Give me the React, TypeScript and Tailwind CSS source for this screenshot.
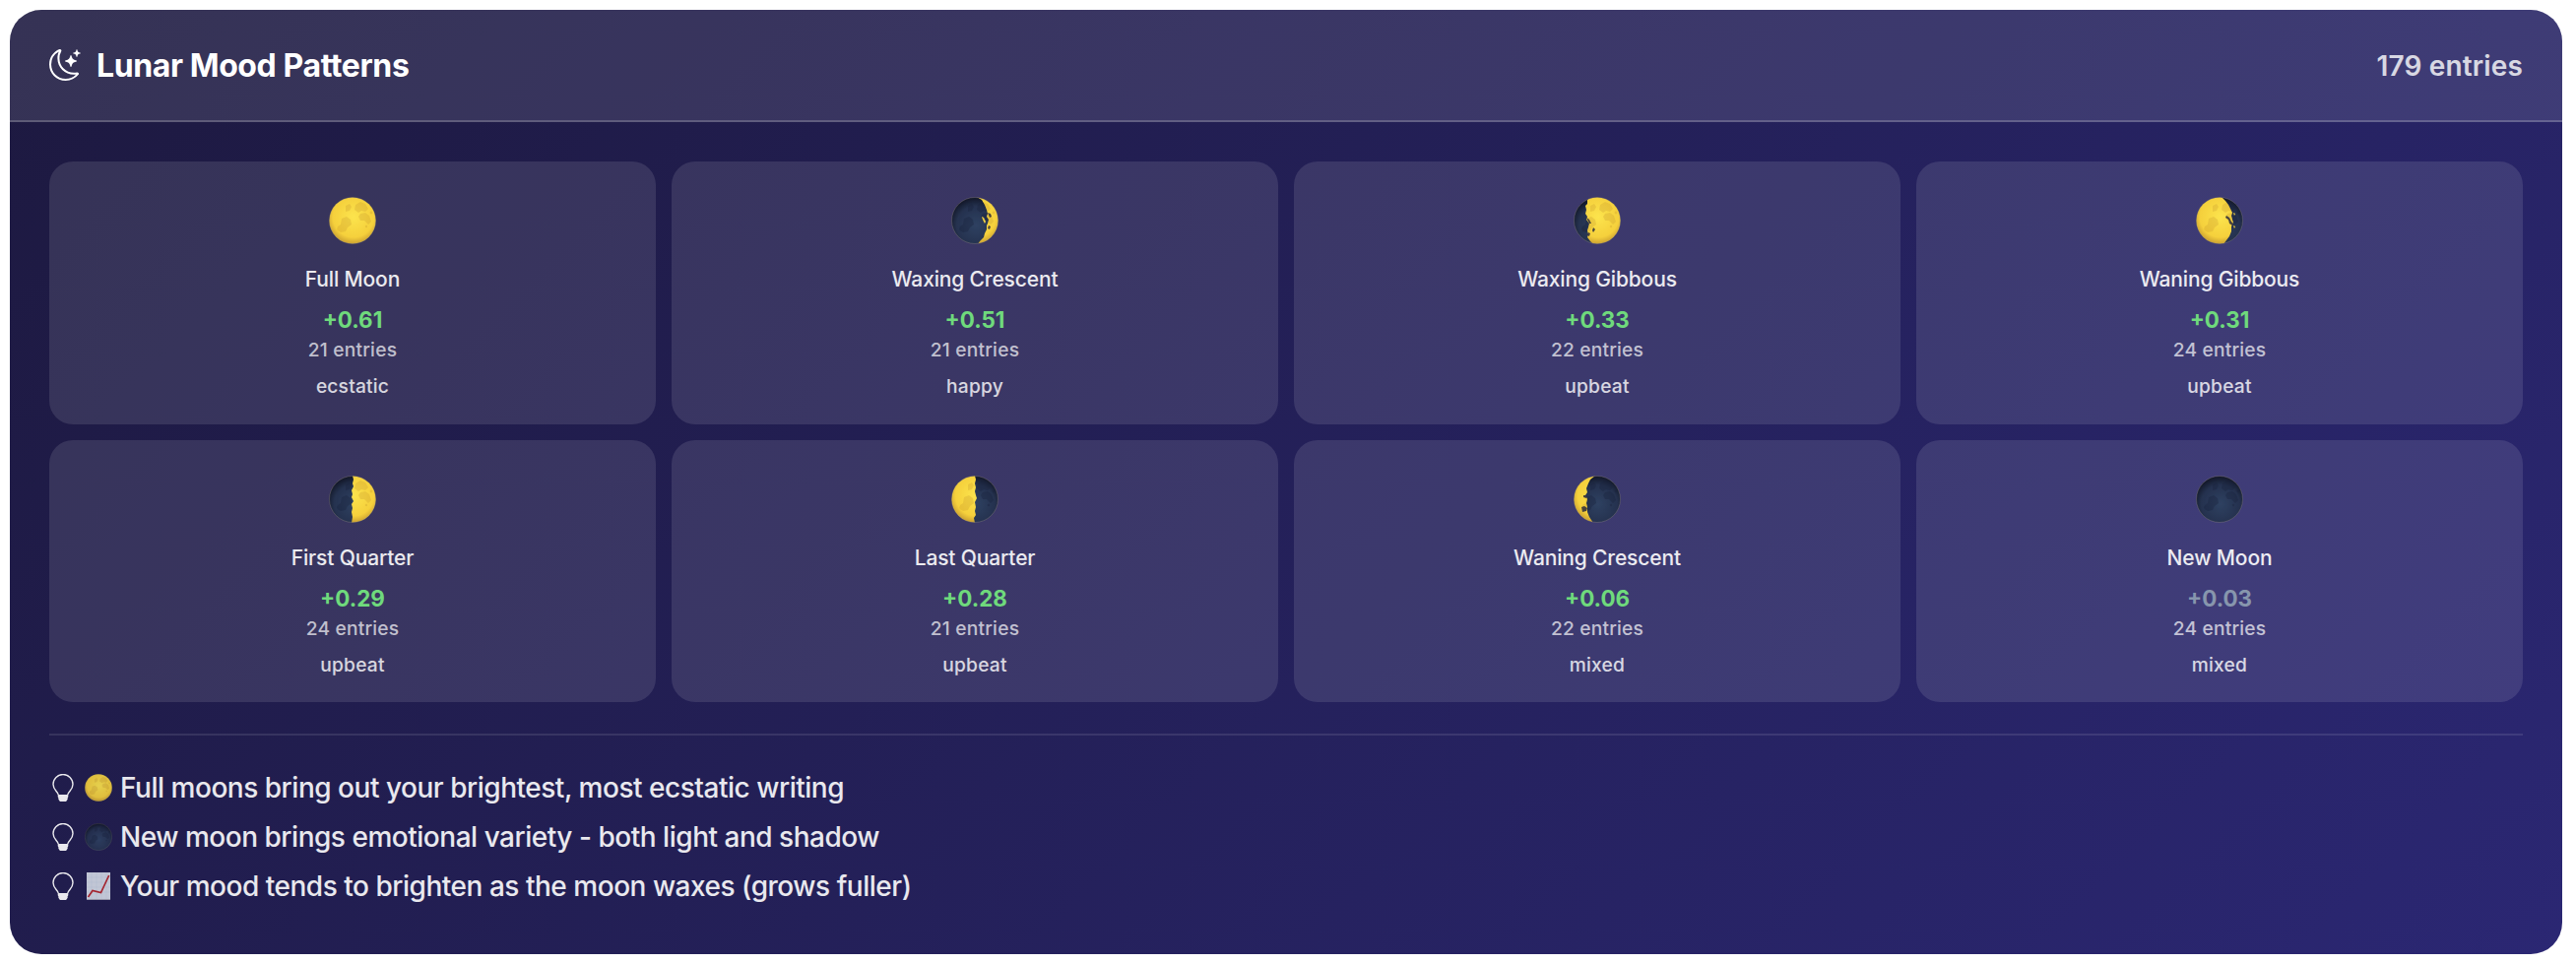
import { useId } from "react"
import { BsMoonStars } from "react-icons/bs"

type PhaseKey =
    | 'full'
    | 'waxingCrescent'
    | 'waxingGibbous'
    | 'waningGibbous'
    | 'firstQuarter'
    | 'lastQuarter'
    | 'waningCrescent'
    | 'new'

interface PhaseStat {
    key: PhaseKey
    name: string
    score: number
    entries: number
    mood: string
}

const phases: PhaseStat[] = [
    { key: 'full', name: 'Full Moon', score: 0.61, entries: 21, mood: 'ecstatic' },
    { key: 'waxingCrescent', name: 'Waxing Crescent', score: 0.51, entries: 21, mood: 'happy' },
    { key: 'waxingGibbous', name: 'Waxing Gibbous', score: 0.33, entries: 22, mood: 'upbeat' },
    { key: 'waningGibbous', name: 'Waning Gibbous', score: 0.31, entries: 24, mood: 'upbeat' },
    { key: 'firstQuarter', name: 'First Quarter', score: 0.29, entries: 24, mood: 'upbeat' },
    { key: 'lastQuarter', name: 'Last Quarter', score: 0.28, entries: 21, mood: 'upbeat' },
    { key: 'waningCrescent', name: 'Waning Crescent', score: 0.06, entries: 22, mood: 'mixed' },
    { key: 'new', name: 'New Moon', score: 0.03, entries: 24, mood: 'mixed' },
]

// Lit side of the disc in a 48x48 box, clipped to the circle
const litPaths: Record<PhaseKey, string> = {
    full: 'M0 0H48V48H0Z',
    waxingCrescent: 'M26 0L31 3L34 8L36 13L37 17L36 20L38 23L37 27L36 29L36 33L34 37L33 41L29 45L27 48H48V0Z M31 20l2 1l2 4l-1 2l-2-4z',
    waxingGibbous: 'M18 0L14 3L14 7L12 9L13 13L12 17L14 20L13 23L16 27L15 31L14 34L15 38L14 41L17 45L20 48H48V0Z',
    waningGibbous: 'M26 0L30 4L33 8L35 12L37 16L36 19L37 23L38 26L36 30L36 35L34 40L31 44L28 48H0V0Z M38 16l2 1l-1 2z M38 29l2 1l-1 2z',
    firstQuarter: 'M24 0L25 4L24 8L25 11L23 15L24 19L23 22L25 26L23 29L24 33L23 37L24 42L23 48H48V0Z',
    lastQuarter: 'M24 0L25 4L24 8L25 12L24 16L25 20L26 23L24 27L25 32L24 36L25 40L23 43L24 48H0V0Z',
    waningCrescent: 'M22 0L17 4L15 8L13 13L14 17L12 20L14 24L13 28L14 32L14 37L16 42L20 48H0V0Z',
    new: '',
}

// Craters that sit right on the terminator of each phase
const rimPaths: Partial<Record<PhaseKey, string>> = {
    waxingCrescent: 'M37 16l3 1l1 3l-2 1z M38 29l2 1l-1 3l-2-1z',
    waxingGibbous: 'M13 21l3 2l2 4l-2 0z M20 31l2 2l-2 3l-1-2z M9 32l2 1l-1 3z M15 36l2 1l-1 3l-2-1z',
    waningGibbous: 'M31 19l3 2l2 4l2 2l-1 2l-3-2l-1-4l-3-2z',
    waningCrescent: 'M10 20l3 0l0 3l-3-1z M8 32l3-1l3 2l-1 3l-4 1z',
}

function MoonIcon({ phase, className }: { phase: PhaseKey; className: string }) {
    const id = useId()
    const craters = (
        <>
            <path d="M27 8l5-3 5 2 3 5-3 3-4-1-3 2-4-3z" />
            <path d="M32 17l5-1 4 3 2 6-3 3-4-4-4 0-2-4z" />
            <path d="M13 22l5-2 4 3 1 5-4 3-2 4-5 1-4-3 1-3 3-2z" />
            <path d="M17 9l4-2 2 3-2 4-4 1z" />
            <circle cx="11" cy="33" r="2" />
            <circle cx="38" cy="30" r="1.2" />
            <circle cx="43" cy="16" r="1.4" />
        </>
    )
    return (
        <svg viewBox="0 0 48 48" className={className} aria-hidden="true">
            <defs>
                <clipPath id={`${id}-disc`}>
                    <circle cx="24" cy="24" r="23.6" />
                </clipPath>
                <clipPath id={`${id}-side`}>
                    <path d={litPaths[phase]} />
                </clipPath>
                <radialGradient id={`${id}-gold`} cx="0.52" cy="0.42" r="0.62">
                    <stop offset="0" stopColor="#fce44e" />
                    <stop offset="0.7" stopColor="#f5d03c" />
                    <stop offset="1" stopColor="#bd912d" />
                </radialGradient>
                <radialGradient id={`${id}-night`} cx="0.52" cy="0.6" r="0.58">
                    <stop offset="0" stopColor="#2f4262" />
                    <stop offset="0.7" stopColor="#25324f" />
                    <stop offset="1" stopColor="#121728" />
                </radialGradient>
            </defs>
            <g clipPath={`url(#${id}-disc)`}>
                <rect width="48" height="48" fill={`url(#${id}-night)`} />
                <g fill="#17203b" opacity="0.35">{craters}</g>
                <g clipPath={`url(#${id}-side)`}>
                    <rect width="48" height="48" fill={`url(#${id}-gold)`} />
                    <g fill="#c5972b" opacity="0.28">{craters}</g>
                </g>
                <path d={rimPaths[phase]} fill="#2c2c3c" opacity="0.85" />
            </g>
            <circle cx="24" cy="24" r="23.5" fill="none" stroke="#b0a78f" strokeOpacity="0.4" strokeWidth="0.7" />
        </svg>
    )
}

function ChartIcon() {
    return (
        <svg viewBox="0 0 28 28" className="size-7" aria-hidden="true">
            <rect x="2" y="0" width="24" height="28" fill="#d3d9e4" />
            <path d="M2.5 5H26M2.5 10H26M2.5 15H26M2.5 20H26M7 0V28M12 0V28M17 0V28M22 0V28" stroke="#bcc9dc" strokeWidth="0.5" />
            <path d="M2 27.5H26" stroke="#a3a5b2" />
            <path d="M3.5 25L8 18.5L16.5 20.5L24.7 3" fill="none" stroke="#b3262c" strokeWidth="1.7" />
        </svg>
    )
}

function BulbIcon() {
    return (
        <svg viewBox="0 0 28 28" className="size-7" aria-hidden="true">
            <path
                d="M9.2 21C8.7 17.7 4 16.2 4 10.5a10 10 0 0 1 20 0C24 16.2 19.3 17.7 18.8 21"
                fill="none"
                stroke="currentColor"
                strokeWidth="1.4"
            />
            <path d="M8.7 21H19.3V23.2L18.6 24.3L18.8 25.2L17.8 27.2L16.8 28H11.2L10.2 27.2L9.2 25.2L9.4 24.3L8.7 23.2Z" fill="currentColor" />
        </svg>
    )
}

const insights = [
    { icon: <MoonIcon phase="full" className="size-7" />, text: 'Full moons bring out your brightest, most ecstatic writing' },
    { icon: <MoonIcon phase="new" className="size-7" />, text: 'New moon brings emotional variety - both light and shadow' },
    { icon: <ChartIcon />, text: 'Your mood tends to brighten as the moon waxes (grows fuller)' },
]

function PhaseCard({ phase }: { phase: PhaseStat }) {
    const scoreColor = phase.score > 0.05 ? 'text-[#6fda7c]' : 'text-[#8796ad]'

    return (
        <div className="flex flex-col items-center rounded-3xl bg-white/[0.11] pt-9">
            <MoonIcon phase={phase.key} className="size-12" />
            <p className="mt-[22px] text-[21px] leading-[28px] font-medium tracking-[-0.15px] text-white/90">{phase.name}</p>
            <p className={`mt-[13px] text-[22.4px] leading-[28px] font-bold ${scoreColor}`}>
                +{phase.score.toFixed(2)}
            </p>
            <p className="mt-[4px] text-[19.2px] leading-[24px] font-medium tracking-[0.2px] text-white/70">{phase.entries} entries</p>
            <p className="mt-[13px] text-[19.2px] leading-[24px] font-medium tracking-[0.2px] text-white/80">{phase.mood}</p>
        </div>
    )
}

export default function App() {
    const total = phases.reduce((sum, p) => sum + p.entries, 0)

    return (
        <div className="h-[978px] bg-white pt-[10px] pr-[14px] pl-[10px] font-['Inter',sans-serif]">
            <div className="h-[959px] overflow-hidden rounded-[32px] bg-linear-135 from-[#1d1940] to-[#2b2773]">
                {/* Header */}
                <div className="flex h-[114px] items-center justify-between border-b-2 border-white/20 bg-white/[0.11] px-10">
                    <div className="flex items-center gap-4 text-white">
                        <BsMoonStars className="size-8" />
                        <h2 className="pt-[2px] text-[32px] leading-[40px] font-bold tracking-[-0.4px]">Lunar Mood Patterns</h2>
                    </div>
                    <span className="pt-[1px] text-[28px] leading-[36px] font-semibold tracking-[0.15px] text-white/80">{total} entries</span>
                </div>

                {/* Phases */}
                <div className="px-10 pt-10">
                    <div className="grid auto-rows-[266.5px] grid-cols-4 gap-4">
                        {phases.map((phase) => (
                            <PhaseCard key={phase.key} phase={phase} />
                        ))}
                    </div>

                    {/* Insights */}
                    <div className="mt-8 border-t-2 border-white/10 pt-[28px]">
                        {insights.map((insight) => (
                            <div key={insight.text} className="flex h-[50px] items-center text-white/90">
                                <BulbIcon />
                                <span className="ml-2 opacity-90">{insight.icon}</span>
                                <span className="ml-[8px] text-[28px] leading-[40px] font-medium tracking-[-0.48px]">{insight.text}</span>
                            </div>
                        ))}
                    </div>
                </div>
            </div>
        </div>
    )
}
